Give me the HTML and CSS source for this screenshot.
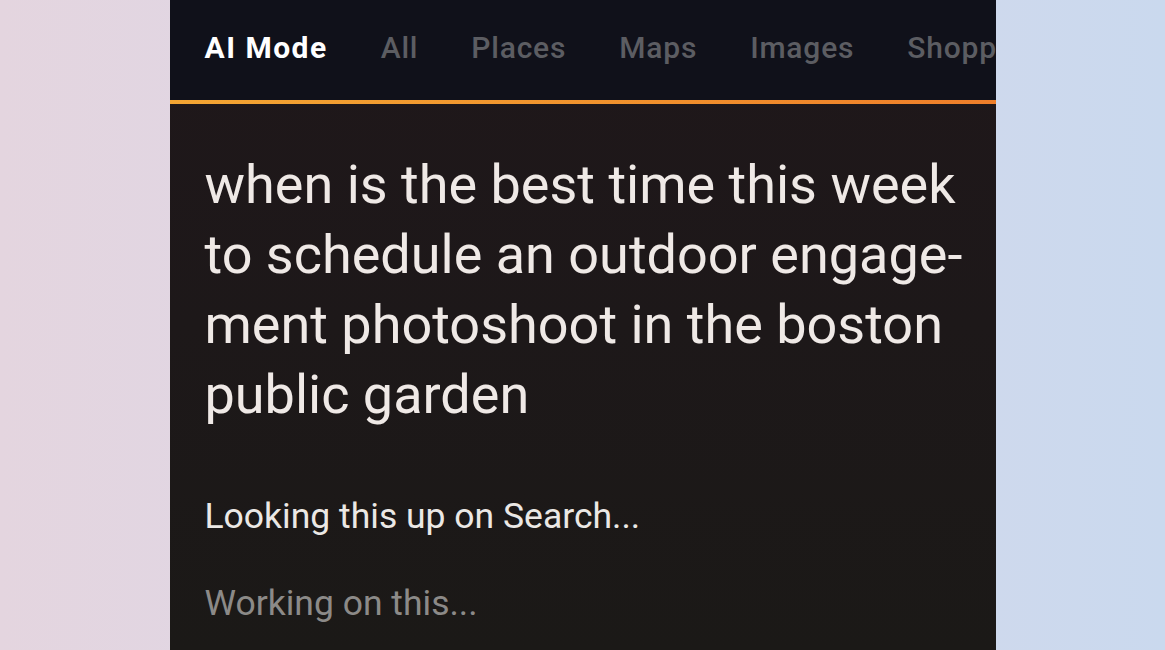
FILE: index.html
```html
<!DOCTYPE html>
<html lang="en">
<head>
<meta charset="utf-8">
<title>AI Mode</title>
<link rel="stylesheet" href="styles.css">
</head>
<body>
<main class="phone">
  <header class="tabs">
    <nav class="tab-row">
      <span class="tab active">AI Mode</span>
      <span class="tab">All</span>
      <span class="tab">Places</span>
      <span class="tab">Maps</span>
      <span class="tab">Images</span>
      <span class="tab">Shopping</span>
    </nav>
  </header>
  <div class="accent"></div>
  <section class="content">
    <h1 class="query">
      <span class="line">when is the best time this week</span>
      <span class="line">to schedule an outdoor engage-</span>
      <span class="line">ment photoshoot in the boston</span>
      <span class="line">public garden</span>
    </h1>
    <p class="status">Looking this up on Search...</p>
    <p class="status dim">Working on this...</p>
  </section>
</main>
</body>
</html>
```

FILE: styles.css
```css
html, body {
  margin: 0;
  padding: 0;
  height: 100%;
}
body {
  background: linear-gradient(90deg, #e4d5df 0%, #ddd7e7 45%, #d2d9ec 70%, #cad9ee 100%);
  display: flex;
  justify-content: center;
  overflow: hidden;
  font-family: "Roboto", "Open Sans", sans-serif;
}
.phone {
  width: 826px;
  height: 650px;
  background: linear-gradient(180deg, #1f171a 0%, #1d1819 50%, #1b1917 100%);
  display: flex;
  flex-direction: column;
  overflow: hidden;
}
.tabs {
  height: 100px;
  background: #10111a;
  display: flex;
  align-items: center;
  overflow: hidden;
}
.tab-row {
  display: flex;
  gap: 53px;
  padding-left: 35px;
  padding-bottom: 6px;
  white-space: nowrap;
}
.tab {
  font-size: 30px;
  letter-spacing: 0.8px;
  color: #5c5d62;
  font-weight: 500;
}
.tab.active {
  color: #ffffff;
  font-weight: 700;
  letter-spacing: 1.5px;
}
.accent {
  height: 4px;
  background: linear-gradient(90deg, #f3a533 0%, #f08f2c 60%, #ee7e2a 100%);
}
.content {
  padding: 46px 35px 0;
}
.query {
  margin: 0;
  font-weight: 400;
  font-size: 54px;
  line-height: 70px;
  color: #efe9e6;
}
.line {
  display: block;
  white-space: nowrap;
}
.status {
  margin: 0;
  font-size: 35.5px;
  line-height: 40px;
  color: #ebe8e5;
}
.query + .status {
  margin-top: 66px;
}
.status.dim {
  margin-top: 47px;
  color: #8c8a88;
}
```
